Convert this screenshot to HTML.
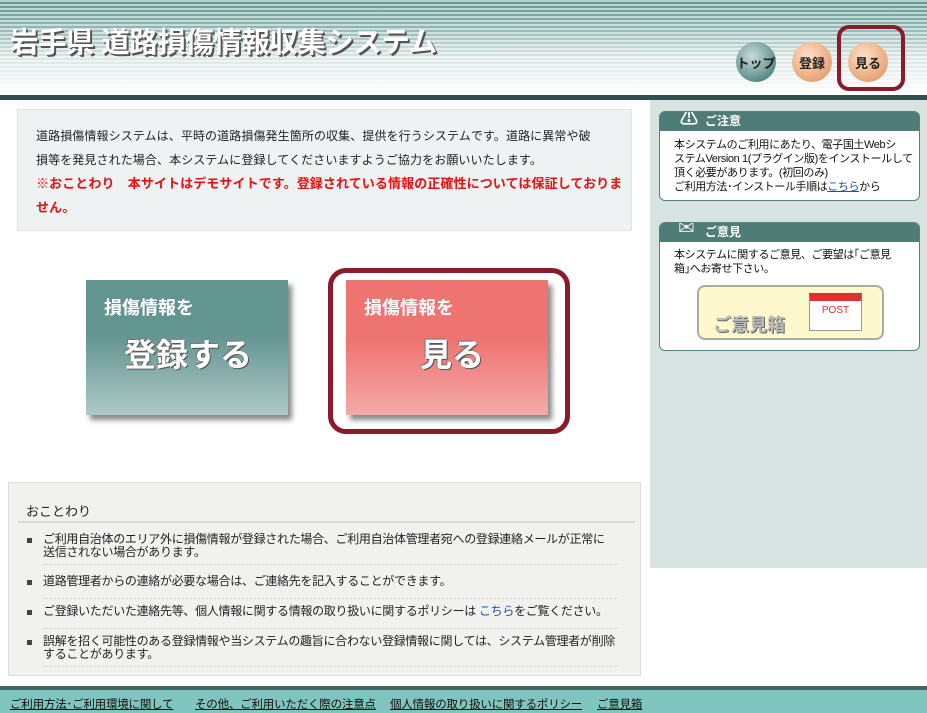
<!DOCTYPE html>
<html><head><meta charset="utf-8"><style>
*{margin:0;padding:0;box-sizing:border-box}
body{width:927px;height:713px;overflow:hidden;background:#fff;font-family:"Liberation Sans","Noto Sans CJK JP",sans-serif;font-size:12px;color:#222;position:relative}
.abs{position:absolute}
#hdr{left:0;top:0;width:927px;height:95px;background:repeating-linear-gradient(180deg,rgba(255,255,255,.55) 0 2px,rgba(255,255,255,0) 2px 4px),linear-gradient(180deg,#5f9590 0%,#8fb8b4 30%,#d8e6e4 60%,#fff 100%)}
#title{left:10px;top:20px;font-size:28.5px;font-weight:bold;color:#fff;letter-spacing:-.5px;text-shadow:2px 2px 0 #555,1px 1px 0 #777;white-space:nowrap}
.ball{width:40px;height:40px;border-radius:50%;font-size:13px;font-weight:bold;display:flex;align-items:center;justify-content:center;color:#222}
#band{left:0;top:95px;width:927px;height:5px;background:#2f4f4c}
#side{left:650px;top:100px;width:277px;height:468px;background:#d6e3e1}
.pan{background:#fff;border:1px solid #56807b;border-radius:6px;overflow:hidden;left:659px;width:261px}
.pan .h{background:#4f7c77;height:19px;color:#fff;font-weight:bold;font-size:12px;padding-left:45px;line-height:19px;position:relative}
.pan .b{padding:7px 0 0 14px;font-size:11px;line-height:14px;color:#111;letter-spacing:-.4px;white-space:nowrap}
#intro{left:17px;top:109px;width:615px;height:122px;background:#eef2f2;border:1px solid #dfe5e5;padding:14px 0 0 18px;line-height:24px;font-size:12px;letter-spacing:.1px;white-space:nowrap}
.btn{width:202px;height:135px;box-shadow:4px 5px 5px #888}
.btn .s{position:absolute;left:18px;top:14px;color:#fff;font-size:18px;font-weight:bold}
.btn .l{position:absolute;top:50px;color:#fff;font-size:32px;font-weight:bold;text-shadow:1px 1px 0 #555,-1px -1px 0 #777}
#note{left:8px;top:482px;width:633px;height:194px;background:#f1f1f0;border:1px solid #ddd}
#note h3{font-weight:normal;font-size:13px;position:absolute;left:17px;top:18px}
#note .ln{position:absolute;left:9px;top:38px;width:617px;border-top:2px solid #d8d8d8}
.li{position:absolute;left:34px;width:575px;font-size:12px;line-height:13px;border-bottom:1px dotted #ccc;letter-spacing:-.3px;white-space:nowrap}
.li:before{content:"";position:absolute;left:-16px;top:5px;width:5px;height:5px;background:#444}
#foot1{left:0;top:686px;width:927px;height:4px;background:#3d6864}
#foot2{left:0;top:690px;width:927px;height:23px;background:#80c4c0;font-size:11.5px;white-space:nowrap;letter-spacing:-.2px}
#foot2 a{color:#111;text-decoration:underline;position:absolute;top:6px}
</style></head><body>
<div id="hdr" class="abs"></div>
<div id="title" class="abs">岩手県 道路損傷情報収集システム</div>
<div class="abs ball" style="left:736px;top:42px;background:radial-gradient(circle at 40% 35%,#c8dcda,#5e8e8a 70%,#3f6b67)">トップ</div>
<div class="abs ball" style="left:792px;top:42px;background:radial-gradient(circle at 40% 35%,#fde0c8,#e8a578 70%,#c98456)">登録</div>
<div class="abs ball" style="left:848px;top:42px;background:radial-gradient(circle at 40% 35%,#fde0c8,#e8a578 70%,#c98456)">見る</div>
<div class="abs" style="left:837px;top:25px;width:68px;height:66px;border:4px solid #8b1a2b;border-radius:12px"></div>
<div id="band" class="abs"></div>
<div id="side" class="abs"></div>
<div class="abs pan" style="top:111px;height:90px"><div class="h"><span style="position:absolute;left:20px;top:-3px;font-size:18px">⚠</span>ご注意</div>
<div class="b">本システムのご利用にあたり、電子国土Webシ<br>ステムVersion 1(プラグイン版)をインストールして<br>頂く必要があります。(初回のみ)<br>ご利用方法･インストール手順は<a style="color:#1a4fb0;text-decoration:underline">こちら</a>から</div></div>
<div class="abs pan" style="top:222px;height:129px"><div class="h"><span style="position:absolute;left:18px;top:-4px;font-size:20px;font-weight:normal;color:#e8f2f0">✉</span>ご意見</div>
<div class="b" style="padding-top:6px">本システムに関するご意見、ご要望は｢ご意見<br>箱｣へお寄せ下さい。</div>
<div class="abs" style="left:37px;top:62px;width:187px;height:55px;background:#fdf9cc;border:2px solid #aaa;border-radius:8px"><span style="position:absolute;left:14px;top:24px;font-size:18px;font-weight:bold;color:#bbb;text-shadow:1px 1px 0 #666">ご意見箱</span>
<div style="position:absolute;left:110px;top:6px;width:53px;height:38px;background:#fff;border:1px solid #999;border-top:8px solid #e03030;color:#e03030;font-size:10px;text-align:center;line-height:20px">POST</div></div></div>
<div id="intro" class="abs">道路損傷情報システムは、平時の道路損傷発生箇所の収集、提供を行うシステムです。道路に異常や破<br>損等を発見された場合、本システムに登録してくださいますようご協力をお願いいたします。<br><span style="color:#e81010;font-weight:bold;font-size:13px">※おことわり　本サイトはデモサイトです。登録されている情報の正確性については保証しておりま<br>せん。</span></div>
<div class="abs btn" style="left:86px;top:280px;background:linear-gradient(180deg,#629490 0%,#629490 40%,#aecac7 100%)"><span class="s">損傷情報を</span><span class="l" style="left:38px">登録する</span></div>
<div class="abs" style="left:328px;top:268px;width:242px;height:166px;border:5px solid #8b1a2b;border-radius:18px"></div>
<div class="abs btn" style="left:346px;top:280px;background:linear-gradient(180deg,#ee7472 0%,#ee7472 45%,#f3aaa8 100%)"><span class="s">損傷情報を</span><span class="l" style="left:74px">見る</span></div>
<div id="note" class="abs"><h3>おことわり</h3><div class="ln"></div>
<div class="li" style="top:50px;height:32px">ご利用自治体のエリア外に損傷情報が登録された場合、ご利用自治体管理者宛への登録連絡メールが正常に<br>送信されない場合があります。</div>
<div class="li" style="top:92px;height:24px">道路管理者からの連絡が必要な場合は、ご連絡先を記入することができます。</div>
<div class="li" style="top:122px;height:24px">ご登録いただいた連絡先等、個人情報に関する情報の取り扱いに関するポリシーは <span style="color:#1a4fb0">こちら</span>をご覧ください。</div>
<div class="li" style="top:152px;height:32px">誤解を招く可能性のある登録情報や当システムの趣旨に合わない登録情報に関しては、システム管理者が削除<br>することがあります。</div>
</div>
<div id="foot1" class="abs"></div>
<div id="foot2" class="abs"><a style="left:10px">ご利用方法･ご利用環境に関して</a><a style="left:195px">その他、ご利用いただく際の注意点</a><a style="left:390px">個人情報の取り扱いに関するポリシー</a><a style="left:597px">ご意見箱</a></div>
</body></html>
